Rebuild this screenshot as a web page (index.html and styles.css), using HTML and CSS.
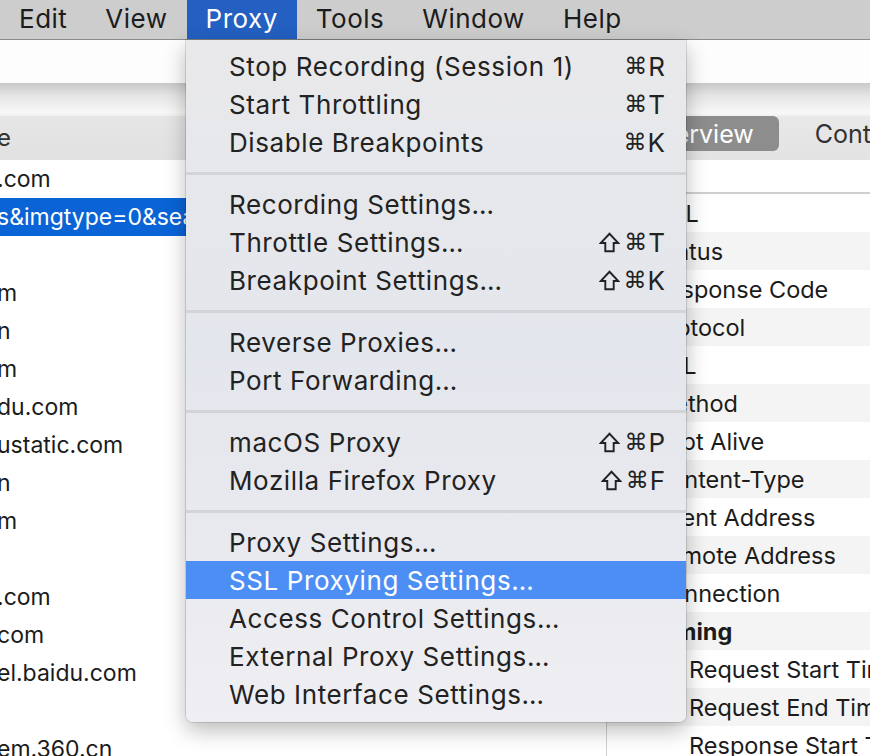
FILE: index.html
```html
<!DOCTYPE html>
<html>
<head>
<meta charset="utf-8">
<link rel="stylesheet" href="styles.css">
</head>
<body>
<div class="screen">
  <div class="menubar">
    <span class="mb-item">Edit</span>
    <span class="mb-item">View</span>
    <span class="mb-item active">Proxy</span>
    <span class="mb-item">Tools</span>
    <span class="mb-item">Window</span>
    <span class="mb-item">Help</span>
  </div>
  <div class="window">
    <div class="toolbar"></div>
    <div class="toolbar-shadow"></div>
    <div class="panes">
      <div class="left-pane">
        <div class="pane-header"><span class="clip">e</span></div>
        <ul class="host-list">
          <li><span class="clip">.com</span></li>
          <li class="selected"><span class="clip">s&amp;imgtype=0&amp;sea</span></li>
          <li></li>
          <li><span class="clip">m</span></li>
          <li><span class="clip">n</span></li>
          <li><span class="clip">m</span></li>
          <li><span class="clip">du.com</span></li>
          <li><span class="clip">ustatic.com</span></li>
          <li><span class="clip">n</span></li>
          <li><span class="clip">m</span></li>
          <li></li>
          <li><span class="clip">.com</span></li>
          <li><span class="clip">com</span></li>
          <li><span class="clip">el.baidu.com</span></li>
          <li></li>
          <li><span class="clip">em.360.cn</span></li>
        </ul>
      </div>
      <div class="right-pane">
        <div class="tabbar">
          <span class="tab active">Overview</span>
          <span class="tab">Contents</span>
        </div>
        <div class="pane-gap"></div>
        <ul class="props">
          <li>URL</li>
          <li>Status</li>
          <li>Response Code</li>
          <li>Protocol</li>
          <li>SSL</li>
          <li>Method</li>
          <li>Kept Alive</li>
          <li>Content-Type</li>
          <li>Client Address</li>
          <li>Remote Address</li>
          <li>Connection</li>
          <li class="group">Timing</li>
          <li class="child">Request Start Time</li>
          <li class="child">Request End Time</li>
          <li class="child">Response Start Time</li>
        </ul>
      </div>
    </div>
  </div>

  <div class="menu">
    <div class="menu-group">
      <div class="mi"><span>Stop Recording (Session 1)</span><span class="sc"><span class="cmd">⌘</span>R</span></div>
      <div class="mi"><span>Start Throttling</span><span class="sc"><span class="cmd">⌘</span>T</span></div>
      <div class="mi"><span>Disable Breakpoints</span><span class="sc"><span class="cmd">⌘</span>K</span></div>
    </div>
    <div class="sep"></div>
    <div class="menu-group">
      <div class="mi"><span>Recording Settings…</span></div>
      <div class="mi"><span>Throttle Settings…</span><span class="sc"><svg class="shift" viewBox="0 0 22 22"><path d="M11 1.8 L20.2 11.5 H15.4 V20.2 H6.6 V11.5 H1.8 Z"/></svg><span class="cmd">⌘</span>T</span></div>
      <div class="mi"><span>Breakpoint Settings…</span><span class="sc"><svg class="shift" viewBox="0 0 22 22"><path d="M11 1.8 L20.2 11.5 H15.4 V20.2 H6.6 V11.5 H1.8 Z"/></svg><span class="cmd">⌘</span>K</span></div>
    </div>
    <div class="sep"></div>
    <div class="menu-group">
      <div class="mi"><span>Reverse Proxies…</span></div>
      <div class="mi"><span>Port Forwarding…</span></div>
    </div>
    <div class="sep"></div>
    <div class="menu-group">
      <div class="mi"><span>macOS Proxy</span><span class="sc"><svg class="shift" viewBox="0 0 22 22"><path d="M11 1.8 L20.2 11.5 H15.4 V20.2 H6.6 V11.5 H1.8 Z"/></svg><span class="cmd">⌘</span>P</span></div>
      <div class="mi"><span>Mozilla Firefox Proxy</span><span class="sc"><svg class="shift" viewBox="0 0 22 22"><path d="M11 1.8 L20.2 11.5 H15.4 V20.2 H6.6 V11.5 H1.8 Z"/></svg><span class="cmd">⌘</span>F</span></div>
    </div>
    <div class="sep"></div>
    <div class="menu-group">
      <div class="mi"><span>Proxy Settings…</span></div>
      <div class="mi hl"><span>SSL Proxying Settings…</span></div>
      <div class="mi"><span>Access Control Settings…</span></div>
      <div class="mi"><span>External Proxy Settings…</span></div>
      <div class="mi"><span>Web Interface Settings…</span></div>
    </div>
  </div>
</div>
</body>
</html>
```

FILE: styles.css
```css
* { box-sizing: border-box; margin: 0; padding: 0; }
html, body { width: 870px; height: 756px; overflow: hidden; background: #fff; }
body { font-family: Inter, "Noto Sans", "DejaVu Sans", sans-serif; color: #222; }

.screen { position: relative; width: 870px; height: 756px; overflow: hidden; }

.menubar {
  height: 40px;
  display: flex;
  align-items: stretch;
  background: #cdcdcd;
  border-bottom: 1px solid #8c8c8c;
  font-size: 26px;
  color: #1c1c1c;
}
.mb-item { display: flex; align-items: center; padding: 0 19px 2px; letter-spacing: 0.5px; }
.mb-item.active { background: #2360c2; color: #fff; }

.window { display: flex; flex-direction: column; height: 716px; }
.toolbar { height: 43px; flex-shrink: 0; background: #fdfdfd; }
.toolbar-shadow { height: 33px; flex-shrink: 0; background: linear-gradient(#c9c9c9, #e6e6e6 40%, #f8f8f8 90%, #f0f0f0); }

.panes { flex: 1; display: flex; min-height: 0; }
.left-pane { width: 607px; border-right: 1px solid #cfcfcf; display: flex; flex-direction: column; overflow: hidden; }
.right-pane { flex: 1; display: flex; flex-direction: column; min-width: 0; }

.pane-header {
  height: 44px;
  flex-shrink: 0;
  background: linear-gradient(#e6e6e6, #e1e1e1);
  display: flex; align-items: center;
  font-size: 24px; color: #333;
  padding-bottom: 2px;
}
.clip { margin-left: -3px; white-space: nowrap; }

.host-list { list-style: none; font-size: 23px; color: #1b1b1b; flex-shrink: 0; }
.host-list li { height: 38px; display: flex; align-items: center; white-space: nowrap; }
.host-list li.selected { background: #0a64d6; color: #fff; }

.tabbar {
  height: 44px;
  flex-shrink: 0;
  background: linear-gradient(#e8e8e8, #e3e3e3);
  display: flex; align-items: flex-start;
  padding-left: 10px;
  font-size: 25px;
}
.tab { height: 35px; display: flex; align-items: center; padding: 0 25px; color: #333; white-space: nowrap; }
.tab.active { background: #8d8d8d; color: #fff; border-radius: 6px; margin-right: 11px; }

.pane-gap { height: 34px; flex-shrink: 0; border-bottom: 2px solid #cfcfcf; }

.props { list-style: none; font-size: 23.5px; color: #1b1b1b; flex-shrink: 0; }
.props li { height: 38px; display: flex; align-items: center; padding-left: 46px; white-space: nowrap; }
.props li:nth-child(even) { background: #f4f4f4; }
.props li.group { font-weight: 700; }
.props li.child { padding-left: 82px; }

.menu {
  position: absolute;
  left: 186px; top: 40px;
  width: 500px;
  padding: 7px 0 9px;
  background: linear-gradient(#e9e9eb, #e3e6ec 45%, #e9eaef 75%, #efeff3);
  border-radius: 0 0 7px 7px;
  box-shadow: 0 8px 22px rgba(0,0,0,0.28), 0 0 0 1px rgba(0,0,0,0.12);
  font-size: 26px;
  letter-spacing: 0.6px;
  color: #222;
}
.mi {
  height: 38px;
  display: flex; align-items: center; justify-content: space-between;
  padding: 0 21px 0 43px;
  white-space: nowrap;
}
.mi.hl { background: #4d8ef5; color: #fff; }
.sc { display: flex; align-items: center; font-size: 26px; letter-spacing: 0; }
.cmd { font-family: "DejaVu Sans", sans-serif; font-size: 23px; margin-right: 1px; }
.shift { width: 21px; height: 21px; margin-right: 4px; fill: none; stroke: currentColor; stroke-width: 2; }
.sep { height: 24px; display: flex; align-items: center; }
.sep::before { content: ""; display: block; width: 100%; height: 3px; background: #d3d4d8; }
```
